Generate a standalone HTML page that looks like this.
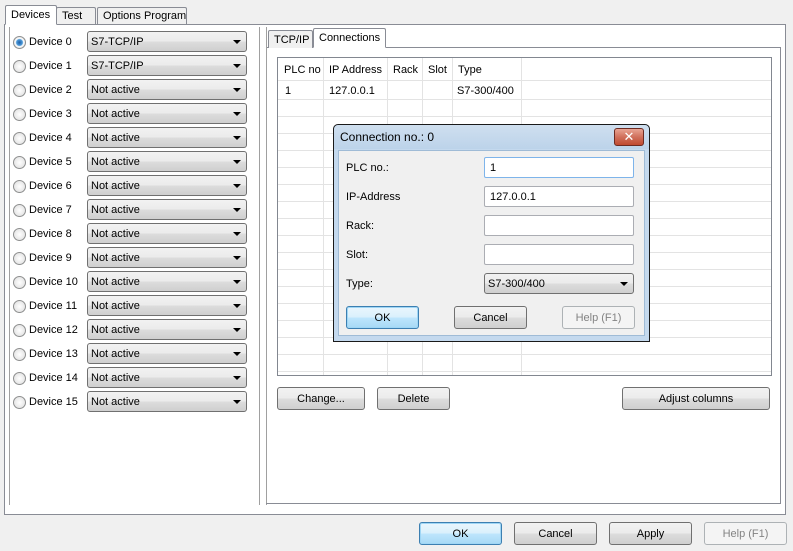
<!DOCTYPE html>
<html><head><style>
*{box-sizing:border-box;margin:0;padding:0}
body{width:793px;height:551px;background:#f0f0f0;font-family:"Liberation Sans","DejaVu Sans",sans-serif;font-size:11px;color:#000;position:relative;overflow:hidden;white-space:nowrap}
.a{position:absolute}
.tab{position:absolute;border:1px solid #898c95;border-bottom:none;background:#f0f0f0;padding:0 5px;line-height:16px;border-radius:2px 2px 0 0}
.tab.sel{background:#fff}
.cb{position:absolute;border:1px solid #707070;border-radius:3px;background:linear-gradient(#f2f2f2,#ebebeb 50%,#dddddd 50%,#cfcfcf);height:21px;line-height:20px;padding-left:3px}
.cb::after{content:"";position:absolute;right:5px;top:8px;border-left:4px solid transparent;border-right:4px solid transparent;border-top:4px solid #000}
.rad{position:absolute;width:13px;height:13px;border-radius:50%;border:1px solid #8e8f8f;background:radial-gradient(#fff,#dcdcdc)}
.btn{position:absolute;border:1px solid #707070;border-radius:3px;background:linear-gradient(#f2f2f2,#ebebeb 50%,#dddddd 50%,#cfcfcf);text-align:center;height:23px;line-height:22px}
.btn.def{border-color:#3c7fb1;background:linear-gradient(#eaf6fd,#d9f0fc 50%,#bee6fd 50%,#a7d9f5);box-shadow:inset 0 0 0 1px #9fd6f5}
.btn.dis{border-color:#adb2b5;background:#f4f4f4;color:#838383}
.in{position:absolute;border:1px solid #abadb3;background:#fff;height:21px;line-height:20px;padding-left:5px;border-radius:2px}
.hl{position:absolute;height:1px;background:#e3e3e3;left:278px;width:493px}
.vl{position:absolute;width:1px;background:#e3e3e3;top:58px;height:317px}
</style></head><body>
<div class="a" style="left:4px;top:24px;width:782px;height:491px;background:#fff;border:1px solid #898c95"></div>
<div class="tab sel" style="left:5px;top:5px;height:20px;width:52px;line-height:19px;border-bottom:1px solid #fff">Devices</div>
<div class="tab" style="left:56px;top:7px;height:17px;width:40px">Test</div>
<div class="tab" style="left:97px;top:7px;height:17px;width:90px">Options Program</div>
<div class="a" style="left:9px;top:27px;width:1px;height:478px;background:#a0a0a0"></div>
<div class="a" style="left:259px;top:27px;width:1px;height:478px;background:#a0a0a0"></div>
<div class="a" style="left:266px;top:27px;width:1px;height:478px;background:#a0a0a0"></div>

<div id="dev"></div>

<div class="a" style="left:267px;top:47px;width:514px;height:457px;border:1px solid #898c95;border-left:none"></div>
<div class="a" style="left:266px;top:503px;width:515px;height:1px;background:#898c95"></div>
<div class="tab" style="left:268px;top:30px;height:18px;width:45px;line-height:18px">TCP/IP</div>
<div class="tab sel" style="left:313px;top:28px;height:20px;width:73px;line-height:18px;border-bottom:1px solid #fff">Connections</div>
<div class="a" style="left:277px;top:57px;width:495px;height:319px;border:1px solid #828790;background:#fff"></div>
<div class="a" style="left:278px;top:58px;width:493px;height:23px;border-bottom:1px solid #e3e3e3"></div>
<div class="a" style="left:284px;top:64px">PLC no</div>
<div class="a" style="left:329px;top:64px">IP Address</div>
<div class="a" style="left:393px;top:64px">Rack</div>
<div class="a" style="left:428px;top:64px">Slot</div>
<div class="a" style="left:458px;top:64px">Type</div>
<div class="a" style="left:285px;top:85px">1</div>
<div class="a" style="left:329px;top:85px">127.0.0.1</div>
<div class="a" style="left:457px;top:85px">S7-300/400</div>
<div class="vl" style="left:323px"></div><div class="vl" style="left:387px"></div><div class="vl" style="left:422px"></div><div class="vl" style="left:452px"></div><div class="vl" style="left:521px"></div>
<div id="rows"></div>

<div class="btn" style="left:277px;top:387px;width:88px">Change...</div>
<div class="btn" style="left:377px;top:387px;width:73px">Delete</div>
<div class="btn" style="left:622px;top:387px;width:148px">Adjust columns</div>

<div class="a" style="left:333px;top:124px;width:317px;height:218px;border:1px solid #1a1a1a;border-radius:5px 5px 0 0;background:#c4d9ee"></div>
<div class="a" style="left:334px;top:125px;width:315px;height:24px;background:linear-gradient(#cfdfef,#bcd3ea);border-radius:5px 5px 0 0"></div>
<div class="a" style="left:340px;top:130px;font-size:12px">Connection no.: 0</div>
<div class="a" style="left:614px;top:128px;width:30px;height:18px;border:1px solid #6d2b22;border-radius:3px;background:linear-gradient(#e8a493,#d0705c 50%,#c04a30);color:#fff;text-align:center;font-weight:bold;line-height:15px;font-size:13px">✕</div>
<div class="a" style="left:338px;top:150px;width:307px;height:186px;background:#f0f0f0;border:1px solid #9fbbd6"></div>
<div class="a" style="left:346px;top:162px">PLC no.:</div>
<div class="in" style="left:484px;top:157px;width:150px;border-color:#7eb4ea">1</div>
<div class="a" style="left:346px;top:191px">IP-Address</div>
<div class="in" style="left:484px;top:186px;width:150px">127.0.0.1</div>
<div class="a" style="left:346px;top:220px">Rack:</div>
<div class="in" style="left:484px;top:215px;width:150px"></div>
<div class="a" style="left:346px;top:249px">Slot:</div>
<div class="in" style="left:484px;top:244px;width:150px"></div>
<div class="a" style="left:346px;top:278px">Type:</div>
<div class="cb" style="left:484px;top:273px;width:150px">S7-300/400</div>
<div class="btn def" style="left:346px;top:306px;width:73px">OK</div>
<div class="btn" style="left:454px;top:306px;width:73px">Cancel</div>
<div class="btn dis" style="left:562px;top:306px;width:73px">Help (F1)</div>

<div class="btn def" style="left:419px;top:522px;width:83px">OK</div>
<div class="btn" style="left:514px;top:522px;width:83px">Cancel</div>
<div class="btn" style="left:609px;top:522px;width:83px">Apply</div>
<div class="btn dis" style="left:704px;top:522px;width:83px">Help (F1)</div>

<script>
var h='';
for(var i=0;i<16;i++){var c=31+i*24;
h+='<div class="rad" style="left:13px;top:'+(c+5)+'px'+(i==0?';background:radial-gradient(circle,#1f5fa8 0,#4d9ad8 3px,#fff 4px,#dcdcdc 6px)':'')+'"></div>';
h+='<div class="a" style="left:29px;top:'+(c+5)+'px">Device '+i+'</div>';
h+='<div class="cb" style="left:87px;top:'+c+'px;width:160px">'+(i<2?'S7-TCP/IP':'Not active')+'</div>';}
document.getElementById('dev').outerHTML=h;
var r='';for(var y=99;y<375;y+=17)r+='<div class="hl" style="top:'+y+'px"></div>';
document.getElementById('rows').outerHTML=r;
</script>
</body></html>
